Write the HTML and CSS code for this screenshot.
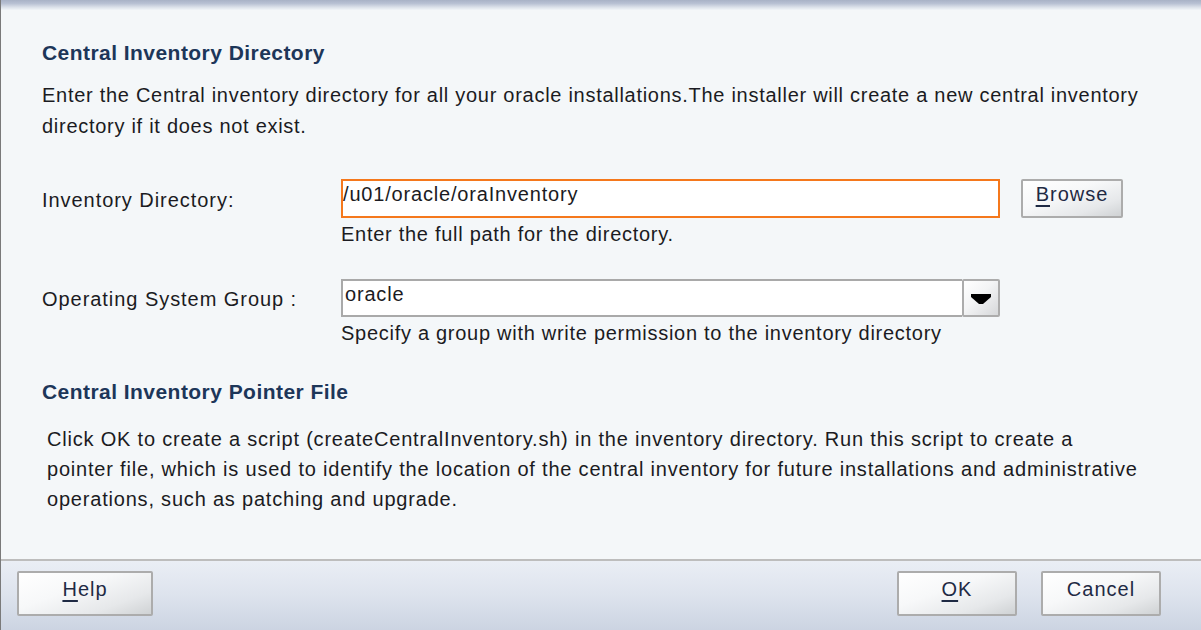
FILE: index.html
```html
<!DOCTYPE html>
<html>
<head>
<meta charset="utf-8">
<link rel="stylesheet" href="styles.css">
</head>
<body>
<div class="window">
  <div class="band"></div>
  <main class="main">
    <h2 class="heading h-first">Central Inventory Directory</h2>
    <p class="intro">Enter the Central inventory directory for all your oracle installations.The installer will create a new central inventory directory if it does not exist.</p>

    <div class="row row-first">
      <label class="label">Inventory Directory:</label>
      <div class="field field-active"><span class="value">/u01/oracle/oraInventory</span></div>
      <button class="btn btn-browse"><span class="btn-text"><u>B</u>rowse</span></button>
      <div class="hint">Enter the full path for the directory.</div>
    </div>

    <div class="row row-second">
      <label class="label">Operating System Group :</label>
      <div class="combo">
        <div class="combo-text"><span class="value value-combo">oracle</span></div>
        <div class="combo-btn">
          <svg width="20" height="10" viewBox="0 0 20 10"><polygon points="0,0 20,0 20,3 12,10 8,10 0,3" fill="#000"/></svg>
        </div>
      </div>
      <div></div>
      <div class="hint">Specify a group with write permission to the inventory directory</div>
    </div>

    <h2 class="heading h-second">Central Inventory Pointer File</h2>
    <p class="pointer">Click OK to create a script (createCentralInventory.sh) in the inventory directory. Run this script to create a<br>pointer file, which is used to identify the location of the central inventory for future installations and administrative<br>operations, such as patching and upgrade.</p>
  </main>
  <footer class="footer">
    <button class="btn btn-foot btn-help"><span class="btn-text"><u>H</u>elp</span></button>
    <div class="spacer"></div>
    <button class="btn btn-foot btn-ok"><span class="btn-text"><u>O</u>K</span></button>
    <button class="btn btn-foot btn-cancel"><span class="btn-text">Cancel</span></button>
  </footer>
</div>
</body>
</html>
```

FILE: styles.css
```css
html, body {
  margin: 0;
  padding: 0;
}
body {
  width: 1201px;
  height: 630px;
  overflow: hidden;
  font-family: "Liberation Sans", Arial, sans-serif;
  font-size: 20px;
  letter-spacing: 0.72px;
  color: #1b1b22;
  background: #f4f7f9;
}
.window {
  height: 630px;
  display: flex;
  flex-direction: column;
  border-left: 1px solid #7a7a7a;
  box-sizing: border-box;
}
.band {
  height: 10px;
  flex: none;
  background: linear-gradient(to bottom, #a8b2c6 0%, #b8c1d3 35%, #d9dfe8 70%, #f1f5f8 100%);
}
.main {
  flex: 1;
  padding: 30px 0 0 41px;
  box-sizing: border-box;
}
.heading {
  margin: 0;
  font-size: 21px;
  line-height: 26px;
  font-weight: bold;
  letter-spacing: 0.45px;
  color: #1d3659;
}
.intro {
  margin: 14px 0 0 0;
  line-height: 31px;
  width: 1125px;
}
.row {
  display: grid;
  grid-template-columns: 278px 659px 102px;
  column-gap: 21px;
  align-items: center;
}
.row-first {
  margin-top: 37px;
}
.row-second {
  margin-top: 33px;
}
.label {
  line-height: 24px;
  padding-top: 2px;
  letter-spacing: 0.95px;
}
.field {
  height: 39px;
  box-sizing: border-box;
  background: #fff;
  border: 2px solid #f5781c;
}
.value {
  display: block;
  line-height: 24px;
  padding-top: 1px;
  padding-left: 0;
  letter-spacing: 0.82px;
}
.value-combo {
  padding-left: 2px;
}
.hint {
  grid-column: 2 / 4;
  line-height: 24px;
  margin-top: 4px;
}
.combo {
  display: flex;
  height: 38px;
}
.combo-text {
  flex: 1;
  background: #fff;
  border: 2px solid #a9a9a9;
  border-right: none;
}
.combo-btn {
  width: 38px;
  box-sizing: border-box;
  border: 2px solid #acacac;
  border-radius: 2px;
  background: linear-gradient(135deg, #ffffff 0%, #f3f4f5 45%, #d6d8da 100%);
  display: flex;
  align-items: center;
  justify-content: center;
}
.combo-btn svg {
  display: block;
  margin-top: 1px;
}
.btn {
  font-family: "Liberation Sans", Arial, sans-serif;
  font-size: 20px;
  letter-spacing: 1px;
  color: #1f2a44;
  border: 2px solid #acacac;
  border-radius: 2px;
  background: linear-gradient(160deg, #ffffff 0%, #f7f8f9 40%, #e6e8ea 75%, #cfd2d4 100%);
  padding: 0;
  box-sizing: border-box;
  display: flex;
  justify-content: center;
  align-items: flex-start;
}
.btn u {
  text-underline-offset: 4px;
  text-decoration-thickness: 2px;
}
.btn-browse {
  height: 39px;
  align-self: start;
}
.btn-browse .btn-text {
  line-height: 24px;
  padding-top: 1px;
}
.footer {
  height: 71px;
  flex: none;
  box-sizing: border-box;
  border-top: 2px solid #bdbdbd;
  background: linear-gradient(to bottom, #eaeef5 0%, #dde3ed 50%, #ccd4e2 100%);
  display: flex;
  align-items: flex-start;
  padding: 10px 40px 0 16px;
}
.btn-foot {
  height: 45px;
}
.btn-foot .btn-text {
  line-height: 24px;
  padding-top: 4px;
}
.btn-help {
  width: 136px;
}
.spacer {
  flex: 1;
}
.btn-ok {
  width: 120px;
  margin-right: 24px;
}
.btn-cancel {
  width: 120px;
}
.h-second {
  margin-top: 34px;
}
.pointer {
  margin: 19px 0 0 5px;
  line-height: 30px;
  width: 1150px;
  white-space: nowrap;
  letter-spacing: 0.8px;
}
```
